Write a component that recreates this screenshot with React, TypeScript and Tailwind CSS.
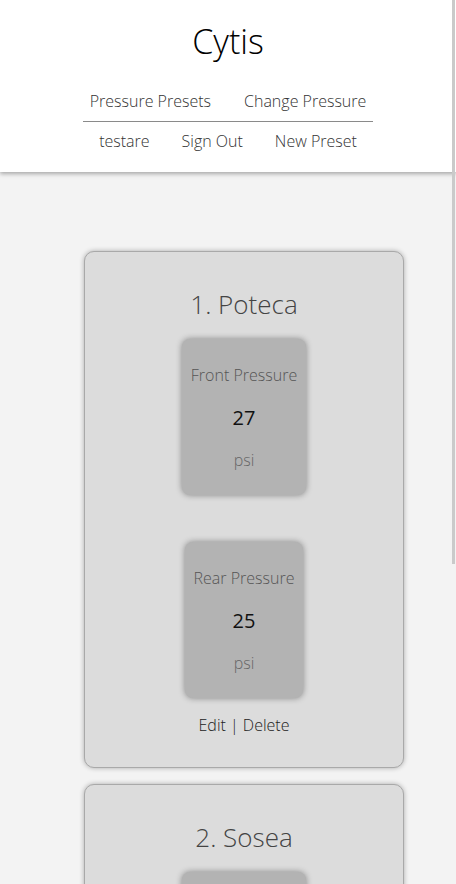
import React from "react";

function PressureBox({ label, value }: { label: string; value: string }) {
  return (
    <div className="flex flex-col items-center rounded-[8px] bg-[#b3b3b3] px-[9px] pt-[25px] pb-[24px] shadow-[0_0_6px_rgba(0,0,0,0.4)]">
      <div className="text-[16px] leading-[22px] text-[#555]">{label}</div>
      <div className="mt-[18px] text-[20px] leading-[27px] font-normal text-[#111]">{value}</div>
      <div className="mt-[18px] text-[16px] leading-[22px] text-[#666]">psi</div>
    </div>
  );
}

function PresetCard({ title, front, rear }: { title: string; front: string; rear: string }) {
  return (
    <div className="w-[320px] ml-[84px] rounded-[10px] bg-[#dcdcdc] border border-[#a9a9a9] shadow-[0_0_5px_rgba(0,0,0,0.3)] pt-[35px] pb-[31px] flex flex-col items-center">
      <div className="text-[26px] leading-[35px] text-[#444]">{title}</div>
      <div className="mt-[17px]">
        <PressureBox label="Front Pressure" value={front} />
      </div>
      <div className="mt-[47px]">
        <PressureBox label="Rear Pressure" value={rear} />
      </div>
      <div className="mt-[16px] text-[16px] leading-[22px] text-[#222]">Edit | Delete</div>
    </div>
  );
}

export default function App() {
  return (
    <div
      className="min-h-[884px] bg-[#f3f3f3] font-light"
      style={{ fontFamily: '"Open Sans", sans-serif' }}
    >
      <header className="bg-white pt-[19px] pb-[20px] flex flex-col items-center shadow-[0_2px_4px_rgba(0,0,0,0.3)] relative z-10">
        <div className="text-[34px] leading-[44px] text-[#000]">Cytis</div>
        <div className="mt-[27px] w-[290px] border-b border-[#8a8a8a] pb-[9px] flex justify-center gap-[33px] text-[16px] leading-[22px] text-[#333]">
          <span>Pressure Presets</span>
          <span>Change Pressure</span>
        </div>
        <div className="pt-[8px] flex justify-center gap-[32px] text-[16px] leading-[22px] text-[#333]">
          <span>testare</span>
          <span>Sign Out</span>
          <span>New Preset</span>
        </div>
      </header>
      <main className="pt-[79px] flex flex-col gap-[16px]">
        <PresetCard title="1. Poteca" front="27" rear="25" />
        <PresetCard title="2. Sosea" front="30" rear="28" />
      </main>
      <div className="fixed top-0 right-[1px] w-[3px] h-[564px] bg-[#cacaca] z-20" />
    </div>
  );
}
